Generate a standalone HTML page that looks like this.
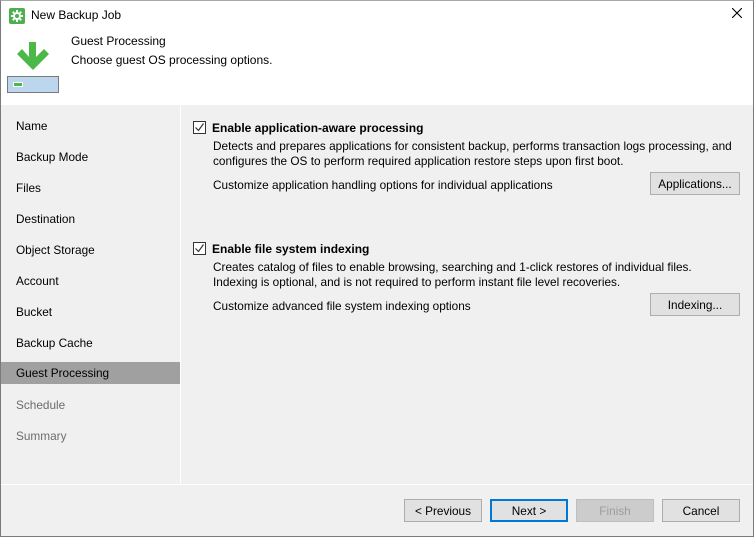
<!DOCTYPE html>
<html><head><meta charset="utf-8"><style>
*{margin:0;padding:0;box-sizing:border-box}
body{width:754px;height:537px;overflow:hidden;font-family:"Liberation Sans",sans-serif;font-size:11.8px;color:#000;background:#f0f0f0;position:relative}
.abs{position:absolute;white-space:nowrap}
.frame{position:absolute;left:0;top:0;width:754px;height:537px;border:1px solid #7a7a7a;border-top:1px solid #aaa}
.title{left:1px;top:1px;width:752px;height:30px;background:#fff}
.header{left:1px;top:31px;width:752px;height:74px;background:#fff}
.side div{position:absolute;left:1px;width:179px;height:22px;line-height:22px;padding-left:15px}
.btn{position:absolute;top:499px;width:78px;height:23px;border:1px solid #adadad;background:#e1e1e1;text-align:center;line-height:22px;white-space:nowrap}
.cb{position:absolute;width:13px;height:13px;border:1px solid #333;background:#fff}
</style></head><body>
<div class="abs title"></div>
<div class="abs" style="left:9px;top:8px;width:16px;height:16px;background:#4caf50;border-radius:2px">
<svg width="16" height="16" viewBox="0 0 16 16"><g fill="none" stroke="#fff" stroke-width="2"><circle cx="8" cy="8" r="3"/><path d="M8 2v2M8 12v2M2 8h2M12 8h2M3.8 3.8l1.4 1.4M10.8 10.8l1.4 1.4M3.8 12.2l1.4-1.4M10.8 5.2l1.4-1.4"/></g></svg></div>
<div class="abs" style="left:31px;top:8px;font-size:12px">New Backup Job</div>
<svg class="abs" style="left:732px;top:8px" width="10" height="10" viewBox="0 0 10 10"><path d="M0 0L10 10M10 0L0 10" stroke="#000" stroke-width="1.1"/></svg>
<div class="abs header"></div>
<svg class="abs" style="left:17px;top:42px" width="32" height="32" viewBox="0 0 32 32"><path d="M12 0h7v15l8-8 5 5-16 16L0 12l5-5 7 8z" fill="#4cb848"/></svg>
<div class="abs" style="left:7px;top:76px;width:52px;height:17px;border:1px solid #7a7a7a;background:#bcd6ee"></div>
<div class="abs" style="left:13px;top:82px;width:10px;height:5px;background:#4cb848;border:1px solid #fff"></div>
<div class="abs" style="left:71px;top:34px;font-size:12px">Guest Processing</div>
<div class="abs" style="left:71px;top:53px;font-size:12px">Choose guest OS processing options.</div>
<div class="abs" style="left:180px;top:105px;width:1px;height:379px;background:#fff"></div>
<div class="abs" style="left:1px;top:484px;width:752px;height:1px;background:#fff"></div>
<div class="side">
<div style="top:115px">Name</div><div style="top:146px">Backup Mode</div><div style="top:177px">Files</div><div style="top:208px">Destination</div><div style="top:239px">Object Storage</div><div style="top:270px">Account</div><div style="top:301px">Bucket</div><div style="top:332px">Backup Cache</div>
<div style="top:362px;background:#a0a0a0;line-height:23px">Guest Processing</div>
<div style="top:394px;color:#6d6d6d">Schedule</div><div style="top:425px;color:#6d6d6d">Summary</div>
</div>
<div class="cb" style="left:193px;top:121px"><svg width="11" height="11" viewBox="0 0 11 11"><path d="M1.5 5.5l3 3 5-7" fill="none" stroke="#333" stroke-width="1.2"/></svg></div>
<div class="abs" style="left:212px;top:121px;font-weight:bold;font-size:12px">Enable application-aware processing</div>
<div class="abs" style="left:213px;top:139px;line-height:15px">Detects and prepares applications for consistent backup, performs transaction logs processing, and<br>configures the OS to perform required application restore steps upon first boot.</div>
<div class="abs" style="left:213px;top:178px">Customize application handling options for individual applications</div>
<div class="btn" style="left:650px;top:172px;width:90px">Applications...</div>
<div class="cb" style="left:193px;top:242px"><svg width="11" height="11" viewBox="0 0 11 11"><path d="M1.5 5.5l3 3 5-7" fill="none" stroke="#333" stroke-width="1.2"/></svg></div>
<div class="abs" style="left:212px;top:242px;font-weight:bold;font-size:12px">Enable file system indexing</div>
<div class="abs" style="left:213px;top:260px;line-height:15px">Creates catalog of files to enable browsing, searching and 1-click restores of individual files.<br>Indexing is optional, and is not required to perform instant file level recoveries.</div>
<div class="abs" style="left:213px;top:299px">Customize advanced file system indexing options</div>
<div class="btn" style="left:650px;top:293px;width:90px">Indexing...</div>
<div class="btn" style="left:404px">&lt; Previous</div>
<div class="btn" style="left:490px;border:2px solid #0078d7;line-height:20px">Next &gt;</div>
<div class="btn" style="left:576px;background:#cccccc;border-color:#bfbfbf;color:#9d9d9d">Finish</div>
<div class="btn" style="left:662px">Cancel</div>
<div class="frame"></div>
</body></html>
